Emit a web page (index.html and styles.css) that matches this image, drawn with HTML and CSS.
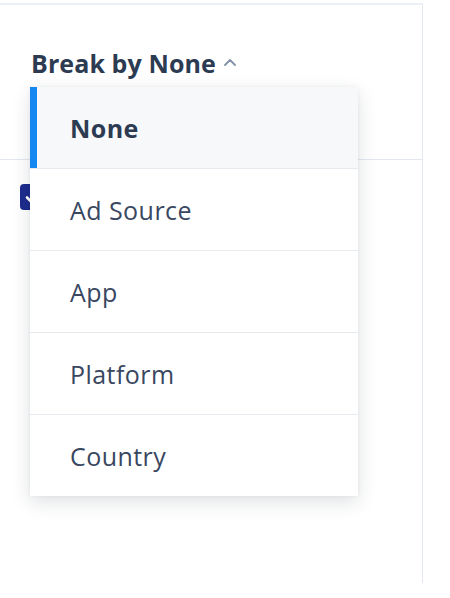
FILE: index.html
```html
<!DOCTYPE html>
<html>
<head>
<meta charset="utf-8">
<link rel="stylesheet" href="styles.css">
</head>
<body>
<div class="panel">
  <div class="panel-head">
    <button class="break-toggle">Break by None
      <svg class="chev" width="14" height="8" viewBox="0 0 14 8"><path d="M2 7 L7 2 L12 7" fill="none" stroke="#8392a6" stroke-width="1.8" stroke-linecap="round" stroke-linejoin="round"/></svg>
    </button>
  </div>
  <div class="panel-body">
    <span class="checkbox"><svg width="26" height="26" viewBox="0 0 26 26"><path d="M7 13.5 L11 17.5 L19 9" fill="none" stroke="#ffffff" stroke-width="2.6" stroke-linecap="round" stroke-linejoin="round"/></svg></span>
  </div>
  <ul class="menu">
    <li class="menu-item active">None</li>
    <li class="menu-item">Ad Source</li>
    <li class="menu-item">App</li>
    <li class="menu-item">Platform</li>
    <li class="menu-item">Country</li>
  </ul>
</div>
</body>
</html>
```
FILE: styles.css
```css
* { box-sizing: border-box; }
html, body { margin: 0; padding: 0; background: #ffffff; }
body { font-family: "Open Sans", "Noto Sans", sans-serif; }

.panel {
  position: relative;
  margin-top: 3px;
  width: 423px;
  height: 580px;
  border-top: 2px solid #edf0f4;
  border-right: 1px solid #e3e8ee;
  background: #ffffff;
}

.panel-head {
  height: 155px;
  border-bottom: 1px solid #e3e8ee;
  padding: 41px 0 0 31px;
}

.break-toggle {
  display: flex;
  align-items: center;
  gap: 7px;
  padding: 0;
  border: 0;
  background: none;
  font-family: inherit;
  font-size: 25px;
  font-weight: 700;
  color: #2c3b52;
  line-height: 34px;
  letter-spacing: 0.1px;
}
.chev { margin-top: -2px; }

.panel-body {
  padding: 24px 0 0 20px;
}
.checkbox {
  display: block;
  width: 26px;
  height: 26px;
  border-radius: 4px;
  background: #1d2b8c;
}
.checkbox svg { display: block; }

.menu {
  position: absolute;
  left: 30px;
  top: 82px;
  width: 328px;
  margin: 0;
  padding: 0;
  list-style: none;
  background: #ffffff;
  box-shadow: 0 6px 18px rgba(30, 40, 60, 0.14), 0 0 4px rgba(30, 40, 60, 0.05);
}
.menu-item {
  height: 82px;
  display: flex;
  align-items: center;
  padding-left: 40px;
  font-size: 25px;
  letter-spacing: 0.45px;
  color: #394760;
  border-top: 1px solid #e6eaef;
}
.menu-item:first-child { border-top: 0; height: 81px; }
.menu-item.active {
  background: #f7f8fa;
  font-weight: 700;
  color: #2c3b52;
  box-shadow: inset 7px 0 0 #1487f0;
}
```
